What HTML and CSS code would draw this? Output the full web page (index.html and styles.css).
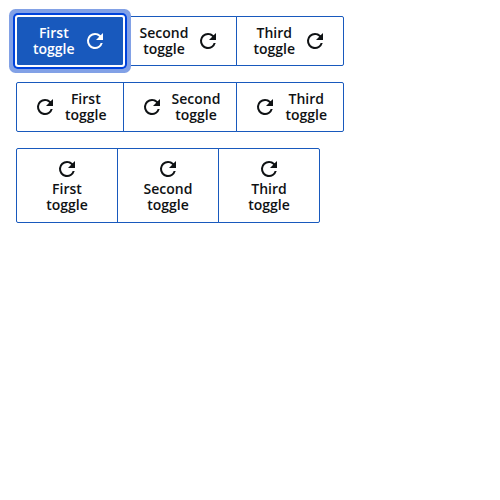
FILE: index.html
```html
<!DOCTYPE html>
<html lang="en">
<head>
<meta charset="utf-8">
<title>Toggle groups</title>
<link rel="stylesheet" href="styles.css">
</head>
<body>
<svg class="defs" aria-hidden="true"><symbol id="reload" viewBox="0 0 24 24"><path d="M17.65 6.35A7.958 7.958 0 0 0 12 4a8 8 0 1 0 7.73 10h-2.08A5.99 5.99 0 0 1 12 18a6 6 0 1 1 0-12c1.66 0 3.14.69 4.22 1.78L13 11h7V4z"/></symbol></svg>
<main class="page">
<div class="group">
<button class="toggle focused"><span class="label">First<br>toggle</span><svg class="icon"><use href="#reload"/></svg></button>
<button class="toggle"><span class="label">Second<br>toggle</span><svg class="icon"><use href="#reload"/></svg></button>
<button class="toggle"><span class="label">Third<br>toggle</span><svg class="icon"><use href="#reload"/></svg></button>
</div>
<div class="group">
<button class="toggle"><svg class="icon"><use href="#reload"/></svg><span class="label">First<br>toggle</span></button>
<button class="toggle"><svg class="icon"><use href="#reload"/></svg><span class="label">Second<br>toggle</span></button>
<button class="toggle"><svg class="icon"><use href="#reload"/></svg><span class="label">Third<br>toggle</span></button>
</div>
<div class="group stacked">
<button class="toggle"><svg class="icon"><use href="#reload"/></svg><span class="label">First<br>toggle</span></button>
<button class="toggle"><svg class="icon"><use href="#reload"/></svg><span class="label">Second<br>toggle</span></button>
<button class="toggle"><svg class="icon"><use href="#reload"/></svg><span class="label">Third<br>toggle</span></button>
</div>
</main>
</body>
</html>
```
FILE: styles.css
```css
* { box-sizing: border-box; }
body { margin: 0; background: #fff; }
.defs { display: none; }
.page { display: flex; flex-direction: column; align-items: flex-start; gap: 16px; padding: 16px; }
.group { display: flex; height: 50px; }
.toggle {
  display: flex; align-items: center; justify-content: center; gap: 8px;
  margin: 0 0 0 -1px; padding: 0 16px; border: 1px solid #1859bd; background: #fff; color: #0f1214;
  font: 600 14px/16px "Open Sans", sans-serif; text-align: center;
}
.toggle:first-child { margin-left: 0; border-radius: 2px 0 0 2px; }
.toggle:last-child { border-radius: 0 2px 2px 0; }
.icon { width: 24px; height: 24px; fill: currentColor; flex: none; }
.toggle.focused {
  position: relative; z-index: 1; border-color: #fff; border-radius: 2px; background: #1859bd; background-clip: padding-box; color: #fff;
  box-shadow: 0 0 0 1px #fff, 0 0 0 3px #0043dc, 0 0 0 7px #82a1e6;
}
.stacked { height: 75px; }
.stacked .toggle { width: 102px; flex-direction: column; gap: 0; padding: 0 16px 2px; }
```
